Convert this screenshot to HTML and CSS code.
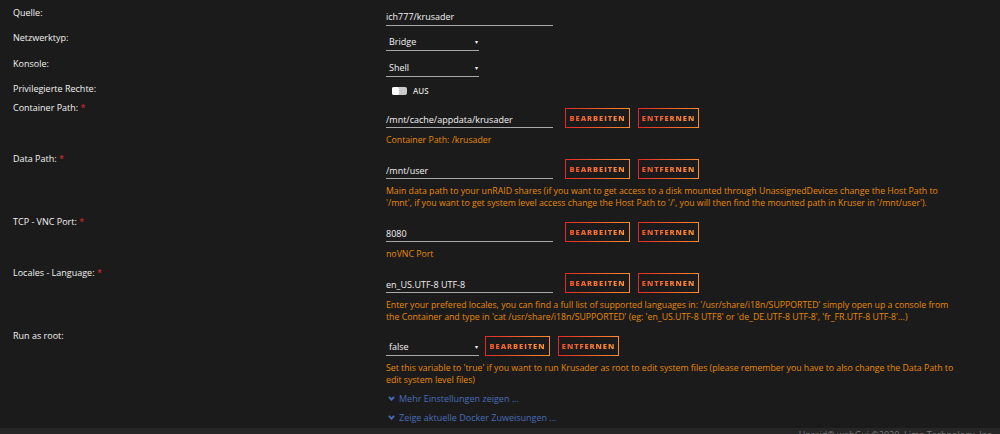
FILE: index.html
```html
<!DOCTYPE html>
<html lang="de">
<head>
  <meta charset="UTF-8"/>
  <title>Docker Template - krusader</title>
  <link rel="stylesheet" href="styles.css">
</head>
<body>
  <div class="form">

    <!-- basic settings -->
    <div class="row basic">
      <div class="label">Quelle:</div>
      <div class="value"><input class="text wide" type="text" value="ich777/krusader"></div>
    </div>
    <div class="row basic tall">
      <div class="label">Netzwerktyp:</div>
      <div class="value">
        <div class="select"><span>Bridge</span><i class="caret">&#9662;</i></div>
      </div>
    </div>
    <div class="row basic">
      <div class="label">Konsole:</div>
      <div class="value">
        <div class="select"><span>Shell</span><i class="caret">&#9662;</i></div>
      </div>
    </div>
    <div class="row switch-row">
      <div class="label">Privilegierte Rechte:</div>
      <div class="value">
        <span class="switch"><span class="knob"></span></span>
        <span class="switch-text">AUS</span>
      </div>
    </div>

    <!-- template config entries -->
    <div class="row entry">
      <div class="label">Container Path: <span class="req">*</span></div>
      <div class="value">
        <div class="controls">
          <input class="text wide" type="text" value="/mnt/cache/appdata/krusader">
          <button class="btn edit">Bearbeiten</button>
          <button class="btn remove">Entfernen</button>
        </div>
        <div class="desc">Container Path: /krusader</div>
      </div>
    </div>

    <div class="row entry">
      <div class="label">Data Path: <span class="req">*</span></div>
      <div class="value">
        <div class="controls">
          <input class="text wide" type="text" value="/mnt/user">
          <button class="btn edit">Bearbeiten</button>
          <button class="btn remove">Entfernen</button>
        </div>
        <div class="desc">Main data path to your unRAID shares (if you want to get access to a disk mounted through UnassignedDevices change the Host Path to '/mnt', if you want to get system level access change the Host Path to '/', you will then find the mounted path in Kruser in '/mnt/user').</div>
      </div>
    </div>

    <div class="row entry">
      <div class="label">TCP - VNC Port: <span class="req">*</span></div>
      <div class="value">
        <div class="controls">
          <input class="text wide" type="text" value="8080">
          <button class="btn edit">Bearbeiten</button>
          <button class="btn remove">Entfernen</button>
        </div>
        <div class="desc">noVNC Port</div>
      </div>
    </div>

    <div class="row entry">
      <div class="label">Locales - Language: <span class="req">*</span></div>
      <div class="value">
        <div class="controls">
          <input class="text wide" type="text" value="en_US.UTF-8 UTF-8">
          <button class="btn edit">Bearbeiten</button>
          <button class="btn remove">Entfernen</button>
        </div>
        <div class="desc">Enter your prefered locales, you can find a full list of supported languages in: '/usr/share/i18n/SUPPORTED' simply open up a console from the Container and type in 'cat /usr/share/i18n/SUPPORTED' (eg: 'en_US.UTF-8 UTF8' or 'de_DE.UTF-8 UTF-8', 'fr_FR.UTF-8 UTF-8'...)</div>
      </div>
    </div>

    <div class="row entry">
      <div class="label">Run as root:</div>
      <div class="value">
        <div class="controls tight">
          <div class="select"><span>false</span><i class="caret">&#9662;</i></div>
          <button class="btn edit">Bearbeiten</button>
          <button class="btn remove">Entfernen</button>
        </div>
        <div class="desc">Set this variable to 'true' if you want to run Krusader as root to edit system files (please remember you have to also change the Data Path to edit system level files)</div>
      </div>
    </div>

    <!-- toggles -->
    <div class="links">
      <a class="more" href="#">
        <svg width="7" height="5" viewBox="0 0 7 5"><polyline points="0.9,0.9 3.5,3.6 6.1,0.9" fill="none" stroke="#486dba" stroke-width="1.9"/></svg>Mehr Einstellungen zeigen ...
      </a>
      <a class="more" href="#">
        <svg width="7" height="5" viewBox="0 0 7 5"><polyline points="0.9,0.9 3.5,3.6 6.1,0.9" fill="none" stroke="#486dba" stroke-width="1.9"/></svg>Zeige aktuelle Docker Zuweisungen ...
      </a>
    </div>
  </div>

  <div class="footer">Unraid&reg; webGui &copy;2020, Lime Technology, Inc.</div>
</body>
</html>
```

FILE: styles.css
```css
html, body {
  height: 100%;
}
body {
  margin: 0;
  display: flex;
  flex-direction: column;
  overflow: hidden;
  background: #1c1b1b;
  color: #f2f2f2;
  font-family: "Open Sans", sans-serif;
  font-size: 9px;
}
.form {
  flex: 1;
  padding: 7px 0 0 13px;
}
/* ROWS */
.row {
  display: grid;
  grid-template-columns: 373px 1fr;
  align-items: start;
}
.label {
  line-height: 12px;
}
.req {
  color: #e22828;
}
.basic {
  height: 25px;
}
.basic.tall {
  height: 26px;
}
.switch-row {
  height: 19px;
}
.entry {
  margin-bottom: 7px;
}
.entry .value {
  padding-top: 6px;
}
/* INPUTS */
.text {
  display: block;
  box-sizing: border-box;
  height: 19px;
  margin: 0;
  padding: 1px 0 0;
  border: none;
  border-bottom: 1px solid #a8a8a8;
  background: transparent;
  color: #f2f2f2;
  font-family: inherit;
  font-size: 9px;
  outline: none;
}
.wide {
  width: 167px;
}
.controls .text {
  height: 20px;
  padding-top: 3px;
}
.select {
  display: flex;
  align-items: center;
  justify-content: space-between;
  box-sizing: border-box;
  width: 93px;
  height: 19px;
  padding: 1px 1px 0 3px;
  border-bottom: 1px solid #a8a8a8;
}
.controls .select {
  height: 20px;
  padding-top: 2px;
}
.caret {
  font-style: normal;
  font-size: 6px;
}
/* SWITCH */
.switch-row .value {
  display: flex;
  align-items: center;
  gap: 6px;
  padding: 2px 0 0 6px;
}
.switch {
  display: inline-block;
  width: 15px;
  height: 8px;
  border-radius: 2px;
  background: #c9c9c9;
}
.knob {
  display: block;
  width: 7px;
  height: 8px;
  border-radius: 2px;
  background: #fff;
}
.switch-text {
  font-size: 8px;
  font-weight: 600;
  color: #ddd;
}
/* BUTTONS */
.controls {
  display: flex;
  align-items: flex-start;
  gap: 8px;
}
.controls .edit {
  margin-left: 4px;
}
.controls.tight .edit {
  margin-left: -2px;
}
.btn {
  box-sizing: border-box;
  height: 20px;
  margin: 0;
  padding: 0;
  border: 1px solid;
  border-image: linear-gradient(90deg, #e22828, #ff8c2f) 1;
  background: linear-gradient(90deg, #f0522a, #ff9433);
  -webkit-background-clip: text;
  background-clip: text;
  color: transparent;
  font-family: inherit;
  font-size: 7.6px;
  font-weight: 800;
  letter-spacing: 0.9px;
  text-align: center;
  text-transform: uppercase;
  cursor: pointer;
}
.btn.edit {
  width: 65px;
}
.btn.remove {
  width: 61px;
}
/* DESCRIPTIONS */
.desc {
  width: 569px;
  margin-top: 6px;
  line-height: 12px;
  font-size: 8.75px;
  color: #e68a00;
}
/* LINKS */
.links {
  display: flex;
  flex-direction: column;
  gap: 7px;
  padding-left: 375px;
}
.more {
  line-height: 12px;
  color: #486dba;
  text-decoration: none;
}
.more svg {
  margin-right: 4px;
  vertical-align: 1px;
}
.footer {
  height: 6px;
  overflow: hidden;
  padding-right: 6px;
  background: #262626;
  color: #777;
  font-size: 9px;
  line-height: 14px;
  text-align: right;
}
```
